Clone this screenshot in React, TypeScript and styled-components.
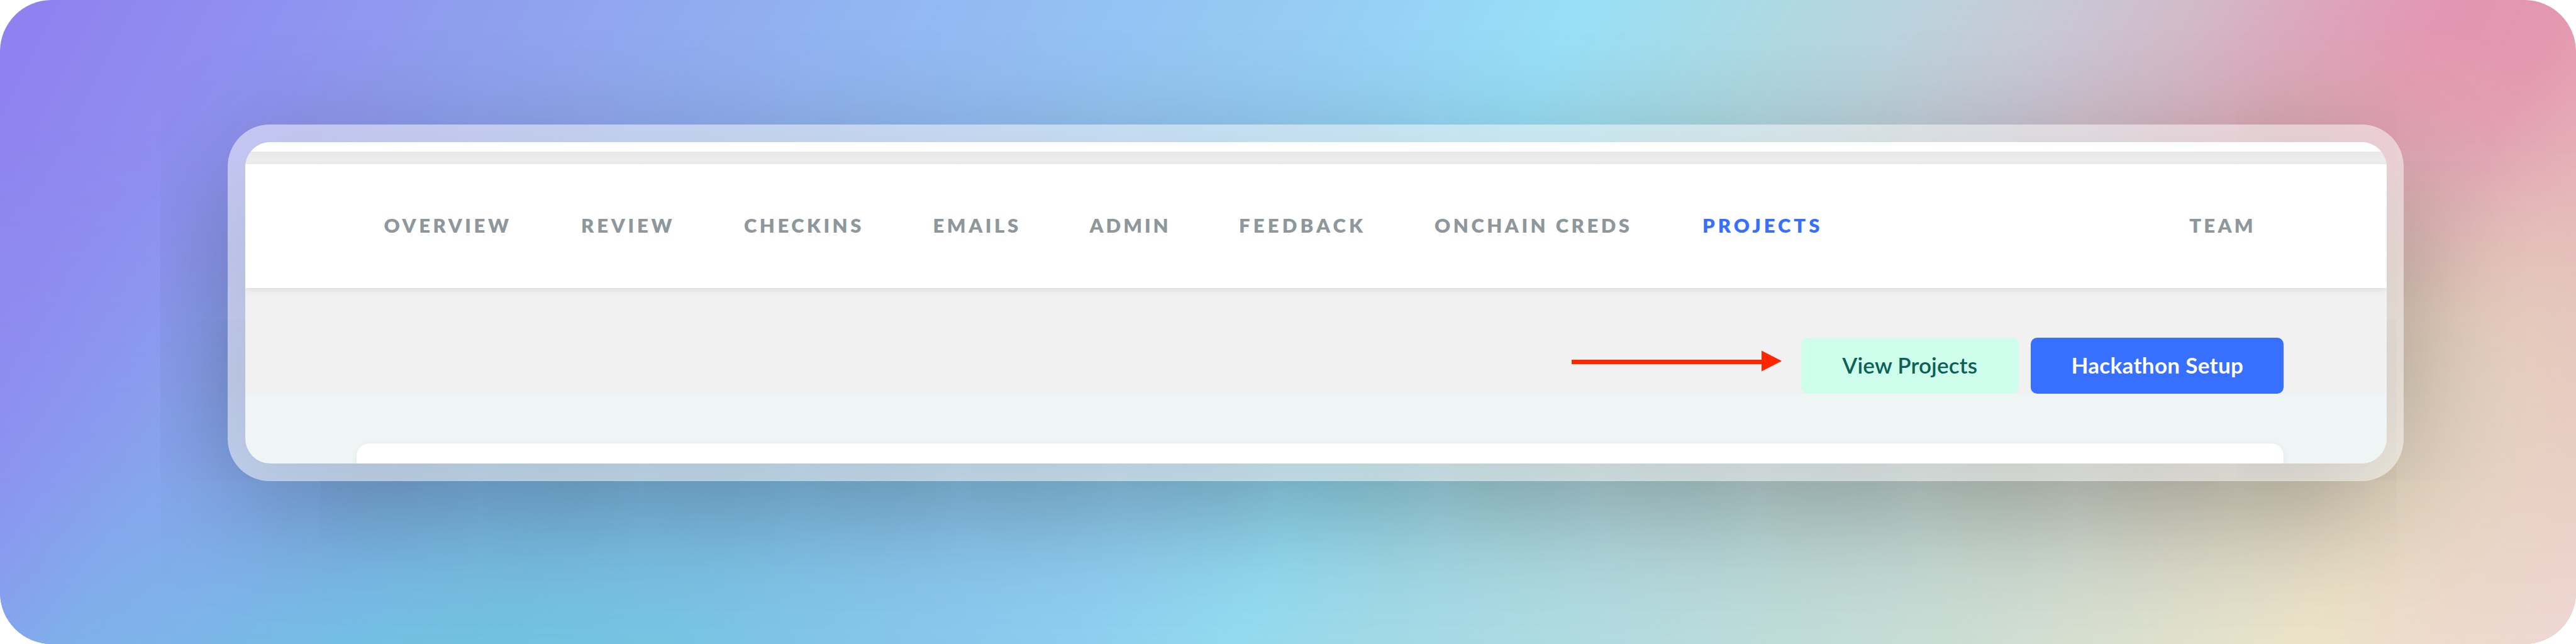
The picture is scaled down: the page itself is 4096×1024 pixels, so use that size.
import React from 'react';
import styled, { createGlobalStyle } from 'styled-components';

const GlobalStyle = createGlobalStyle`
  *, *::before, *::after { box-sizing: border-box; }
  body { margin: 0; background: #ffffff; font-family: Lato, "Liberation Sans", sans-serif; }
`;

const Stage = styled.main`
  position: relative;
  isolation: isolate;
  display: flex;
  width: 4096px;
  height: 1024px;
  padding: 198px 273.7px 259.5px 362px;
  border-radius: 82px;
  overflow: hidden;
  background:
    radial-gradient(
      ellipse 820px 640px at 91% 66%,
      rgba(222, 206, 184, 0.95) 0%, rgba(222, 204, 184, 0.75) 35%,
      rgba(222, 200, 186, 0.3) 70%, rgba(222, 196, 190, 0) 100%
    ),
    radial-gradient(
      ellipse 900px 620px at 77% 80%,
      rgba(194, 216, 208, 0.9) 0%, rgba(194, 216, 208, 0.6) 45%, rgba(194, 216, 208, 0) 100%
    ),
    linear-gradient(
      116.5deg,
      #8f82f0 1.7%, #8f90f0 9%, #8fa3ee 19%, #93bbf2 34%, #96cdf4 46%,
      #98dff7 54.6%, #a9dbe6 60%, #b9d4dd 65.5%, #c8c9d6 70.9%, #d2b9c9 76%,
      #dca6bb 80%, #e396b1 84.5%, #e397b0 88.5%, #e8aab6 92%, #e9bcbc 100%
    );

  /* cooler, creamier colours that take over towards the bottom edge */
  &::after {
    content: '';
    position: absolute;
    inset: 0;
    z-index: -2;
    background: linear-gradient(
      116.5deg,
      #8c90f0 6.5%, #7fafea 13.2%, #7db4e9 16.8%, #74bde3 22.4%, #71c1df 28.1%,
      #76c3e2 33.8%, #86c5ea 41.7%, #8dccee 48%, #92d9ee 53.6%, #a0d8e6 58.2%,
      #acdae2 63.8%, #bddbd8 72.3%, #cbddd3 79.1%, #dee0cc 85.9%, #ebe3c8 90.5%,
      #eddacb 95%, #eed7d3 100%
    );
    mask-image: linear-gradient(to bottom, transparent 20%, rgba(0, 0, 0, 0.5) 70%, #000 100%);
  }
`;

const Frame = styled.div`
  position: relative;
  display: flex;
  flex: 1;
  padding: 27.5px;
  border-radius: 67px;
  background: rgba(255, 255, 255, 0.5);

  &::before {
    content: '';
    position: absolute;
    inset: 27.5px;
    z-index: -1;
    border-radius: 40px;
    box-shadow: 0 43px 198px rgba(0, 0, 0, 0.4);
  }
`;

const Window = styled.div`
  display: flex;
  flex-direction: column;
  flex: 1;
  border-radius: 40px;
  overflow: hidden;
  background: #eff5f5;
`;

const TopStrip = styled.div`
  flex: none;
  height: 15.5px;
  background: #ffffff;
`;

const Divider = styled.div`
  flex: none;
  height: 19.7px;
  background: linear-gradient(#e9e9e9, #ededed 70%, #ebebeb);
`;

const Header = styled.header`
  position: relative;
  display: flex;
  flex: none;
  justify-content: space-between;
  align-items: center;
  height: 197.4px;
  padding: 0 208px 3px 221px;
  background: #ffffff;
  box-shadow: 0 3px 9px rgba(0, 0, 0, 0.09);
`;

const Nav = styled.nav`
  display: flex;
`;

const NavLink = styled.a<{ $width?: number; $tracking: number; $active?: boolean }>`
  width: ${({ $width }) => ($width ? `${$width}px` : 'auto')};
  color: ${({ $active }) => ($active ? '#3770ff' : '#8e989c')};
  font-size: 31px;
  font-weight: 800;
  line-height: 40px;
  letter-spacing: ${({ $tracking }) => $tracking}px;
  white-space: nowrap;
`;

const ActionBar = styled.section`
  display: flex;
  flex: none;
  justify-content: flex-end;
  align-items: flex-end;
  height: 168.4px;
  padding-right: 163.5px;
  background: #f1f1f1;
`;

const Arrow = styled.svg`
  flex: none;
  width: 335px;
  height: 34px;
  margin: 0 31px 35.5px 0;
`;

const Button = styled.button<{ $primary?: boolean }>`
  display: flex;
  justify-content: center;
  align-items: center;
  width: ${({ $primary }) => ($primary ? 402 : 345.5)}px;
  height: 89px;
  margin: 0 0 0 ${({ $primary }) => ($primary ? 19.8 : 0)}px;
  padding: 0 0 3px;
  border: 0;
  border-radius: 10px;
  background: ${({ $primary }) => ($primary ? '#3770ff' : '#cffdeb')};
  color: ${({ $primary }) => ($primary ? '#ffffff' : '#0b6157')};
  font-family: inherit;
  font-size: 35px;
  font-weight: ${({ $primary }) => ($primary ? 700 : 600)};
  letter-spacing: ${({ $primary }) => ($primary ? 0.33 : 0.2)}px;
  line-height: 44px;
`;

const Content = styled.section`
  flex: 1;
  padding: 79px 163.5px 0 177px;
`;

const Card = styled.div`
  height: 120px;
  border-radius: 20px;
  background: #ffffff;
  box-shadow: 0 2px 10px rgba(0, 40, 40, 0.07);
`;

const links = [
  { label: 'OVERVIEW', width: 313.5, tracking: 4.6 },
  { label: 'REVIEW', width: 259, tracking: 4.8 },
  { label: 'CHECKINS', width: 300.5, tracking: 4.5 },
  { label: 'EMAILS', width: 249, tracking: 4.6 },
  { label: 'ADMIN', width: 237.5, tracking: 4 },
  { label: 'FEEDBACK', width: 311.1, tracking: 5.2 },
  { label: 'ONCHAIN CREDS', width: 425.9, tracking: 4.5 },
  { label: 'PROJECTS', width: 200, tracking: 5, active: true },
];

export default function App() {
  return (
    <>
      <GlobalStyle />
      <Stage>
        <Frame>
          <Window>
            <TopStrip />
            <Divider />
            <Header>
              <Nav>
                {links.map((link) => (
                  <NavLink key={link.label} $width={link.width} $tracking={link.tracking} $active={link.active}>
                    {link.label}
                  </NavLink>
                ))}
              </Nav>
              <NavLink $tracking={4.3}>TEAM</NavLink>
            </Header>
            <ActionBar>
              <Arrow viewBox="0 0 335 34" aria-hidden="true">
                <path d="M1 15h303v7H1z" fill="#ff2600" />
                <path d="M303 0.5 335 17 303 33.5z" fill="#ff2600" />
              </Arrow>
              <Button>View Projects</Button>
              <Button $primary>Hackathon Setup</Button>
            </ActionBar>
            <Content>
              <Card />
            </Content>
          </Window>
        </Frame>
      </Stage>
    </>
  );
}
